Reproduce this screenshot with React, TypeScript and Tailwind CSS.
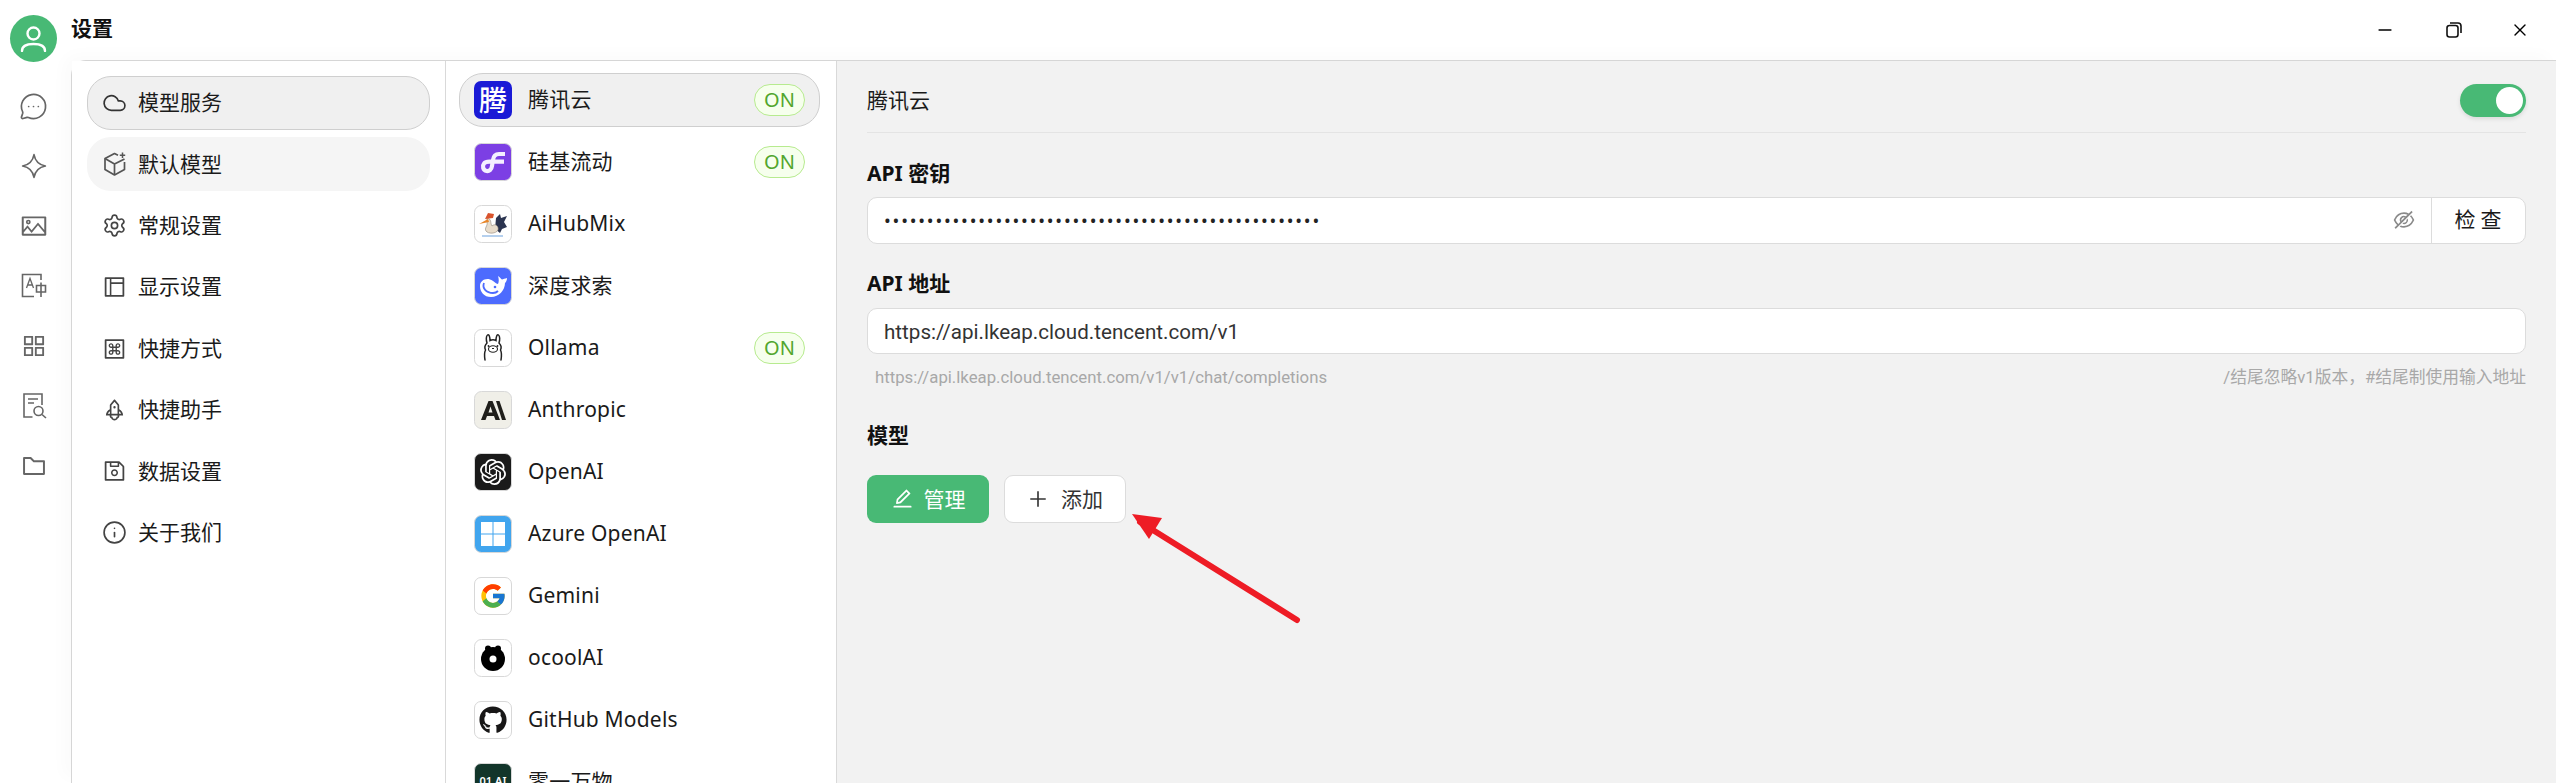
import type { ReactNode } from "react";
import { MessageCircleMore, Cloud, Settings, Info, Minus, X } from "lucide-react";
import {
  AiOutlineLayout,
  AiOutlineMacCommand,
  AiOutlineRocket,
  AiOutlineSave,
  AiOutlineEyeInvisible,
  AiOutlineEdit,
  AiOutlinePlus,
  AiOutlinePicture,
  AiOutlineAppstore,
  AiOutlineFolder,
} from "react-icons/ai";
import { FcGoogle } from "react-icons/fc";
import { FaGithub } from "react-icons/fa";
import { SiOpenai } from "react-icons/si";

const cjk = "font-['Noto_Sans','Noto_Sans_CJK_SC',sans-serif]";
const roboto = "font-['Roboto','Noto_Sans_CJK_SC',sans-serif]";

function SparkIcon() {
  return (
    <svg width="26" height="26" viewBox="0 0 24 24" fill="none" stroke="#666" strokeWidth="1.5" strokeLinejoin="round">
      <path d="M12 1.5C13 7 17 11 22.5 12C17 13 13 17 12 22.5C11 17 7 13 1.5 12C7 11 11 7 12 1.5Z" />
    </svg>
  );
}

function TranslateIcon() {
  return (
    <svg width="26" height="26" viewBox="0 0 26 26" fill="none" stroke="#666" strokeWidth="1.6">
      <path d="M20 7V1.5H1.5V23.5H13" />
      <path d="M5.5 15L9 5.5L12.5 15M6.8 12H11.2" strokeWidth="1.3" />
      <path d="M15.5 12.5H24.5V19H15.5ZM20 9.5V24" />
    </svg>
  );
}

function DocSearchIcon() {
  return (
    <svg width="26" height="26" viewBox="0 0 26 26" fill="none" stroke="#666" strokeWidth="1.6">
      <path d="M21 12V1H3V24H11.5" />
      <path d="M7 6H17M7 10H13" />
      <circle cx="17.5" cy="18" r="4.5" />
      <path d="M21 21.5L25 25" />
    </svg>
  );
}

function CubeIcon() {
  return (
    <svg width="24" height="24" viewBox="0 0 24 24" fill="none" stroke="#555" strokeWidth="1.7" strokeLinejoin="round">
      <path d="M15 3.2L11.5 1.5L2 6.5V17.5L11.5 23L21.5 17.5V10" />
      <path d="M2 6.5L11.5 12L21.5 7M11.5 12V23" />
      <path d="M19.5 0.5V6M16.8 3.2H22.2" strokeWidth="1.5" />
    </svg>
  );
}

function SiliconIcon() {
  return (
    <svg width="38" height="38" viewBox="0 0 38 38">
      <rect x="0.5" y="0.5" width="37" height="37" rx="7" fill="#7c3fe4" stroke="#d8d8d8" />
      <path d="M31 11H25C21 11 19.5 13 19 17L18 23C17.5 27 15 28.5 12.5 28C9 27.3 8 23 10 20.5C11.5 18.5 14 18.7 16 18.7H30" fill="none" stroke="#f4efff" strokeWidth="4.2" />
    </svg>
  );
}

function AiHubIcon() {
  return (
    <svg width="38" height="38" viewBox="0 0 38 38">
      <rect x="0.5" y="0.5" width="37" height="37" rx="7" fill="#fff" stroke="#d8d8d8" />
      <path d="M22 13L26 9L27 13L33 11L30 17L33 22L28 24L26 28L21 24Z" fill="#2b3450" />
      <path d="M13 13C18 14 16 18 18 21C21 18 25 21 24 25C22 29 14 29 12 26C10 23 14 21 13 17Z" fill="#e8dccb" stroke="#8f8578" strokeWidth="0.6" />
      <path d="M5 19L14 14L15 17Z" fill="#e8862a" />
      <path d="M11 14L14 8L20 9L19 13Z" fill="#d9532c" />
      <path d="M8 31H29" stroke="#9cc0e8" strokeWidth="1.5" />
    </svg>
  );
}

function DeepseekIcon() {
  return (
    <svg width="38" height="38" viewBox="0 0 38 38">
      <rect x="0.5" y="0.5" width="37" height="37" rx="7" fill="#4d6bfe" stroke="#d8d8d8" />
      <path d="M6 19C6 14 11 11 16 12.5C20 14 22 17 24 17C25 15 25 12 24 9C26 10 27 12 28 12.5C29 12 31 11.5 33 11C33 13.5 32 15 31 16C31 23 25 30 17 30C10 30 6 25 6 19Z" fill="#fff" />
      <path d="M10 16C8 21 12 26 19 26C21 26 23 25 24 24" fill="none" stroke="#4d6bfe" strokeWidth="1.8" />
      <circle cx="21" cy="20" r="1.3" fill="#4d6bfe" />
    </svg>
  );
}

function OllamaIcon() {
  return (
    <svg width="38" height="38" viewBox="0 0 38 38" fill="none">
      <rect x="0.5" y="0.5" width="37" height="37" rx="7" fill="#fff" stroke="#d8d8d8" />
      <path d="M13 14C12 11 12 7 13.5 6C15 5 16 8 16 11.5C18 10.5 20 10.5 22 11.5C22 8 23 5 24.5 6C26 7 26 11 25 14C27 16 27.5 19 26.5 21C28 24 27.5 28 27 31M13 14C11 16 10.5 19 11.5 21C10 24 10.5 28 11 31" stroke="#222" strokeWidth="1.5" strokeLinecap="round" />
      <ellipse cx="19" cy="20" rx="4.5" ry="3.2" stroke="#222" strokeWidth="1.1" />
      <circle cx="14.5" cy="17" r="0.9" fill="#222" />
      <circle cx="23.5" cy="17" r="0.9" fill="#222" />
      <path d="M18 19.5H20" stroke="#222" strokeWidth="1.2" />
    </svg>
  );
}

function AnthropicIcon() {
  return (
    <svg width="38" height="38" viewBox="0 0 38 38">
      <rect x="0.5" y="0.5" width="37" height="37" rx="7" fill="#f0efe8" stroke="#d8d8d8" />
      <path d="M7 29L14.5 10H18.5L26 29H21.5L20 25H13L11.5 29ZM14.5 21.5H18.5L16.5 15.5Z" fill="#1f1e1a" />
      <path d="M22 10H25.5L32 29H28Z" fill="#1f1e1a" />
    </svg>
  );
}

function AzureIcon() {
  return (
    <svg width="38" height="38" viewBox="0 0 38 38">
      <rect x="0.5" y="0.5" width="37" height="37" rx="7" fill="#41a5ee" stroke="#d8d8d8" />
      <rect x="7" y="7" width="11.5" height="11.5" fill="#fff" />
      <rect x="19.5" y="7" width="11.5" height="11.5" fill="#fff" />
      <rect x="7" y="19.5" width="11.5" height="11.5" fill="#fff" />
      <rect x="19.5" y="19.5" width="11.5" height="11.5" fill="#fff" />
    </svg>
  );
}

function OcoolIcon() {
  return (
    <svg width="38" height="38" viewBox="0 0 38 38">
      <rect x="0.5" y="0.5" width="37" height="37" rx="7" fill="#fff" stroke="#d8d8d8" />
      <circle cx="19" cy="20" r="12" fill="#000" />
      <circle cx="14" cy="9.5" r="3" fill="#000" />
      <circle cx="24" cy="9.5" r="3" fill="#000" />
      <circle cx="19" cy="20" r="3.5" fill="#fff" />
    </svg>
  );
}

function Tile({ className, children }: { className: string; children: ReactNode }) {
  return (
    <div className={`flex h-[38px] w-[38px] shrink-0 items-center justify-center rounded-[7px] border border-[#d8d8d8] ${className}`}>
      {children}
    </div>
  );
}

const sideIcons = [
  <MessageCircleMore key="chat" size={29} strokeWidth={1.4} color="#666" />,
  <SparkIcon key="spark" />,
  <AiOutlinePicture key="img" size={28} color="#666" />,
  <TranslateIcon key="tr" />,
  <AiOutlineAppstore key="grid" size={28} color="#666" />,
  <DocSearchIcon key="file" />,
  <AiOutlineFolder key="folder" size={28} color="#666" />,
];

const menuItems = [
  { label: "模型服务", icon: <Cloud size={26} strokeWidth={1.6} color="#333" />, active: true },
  { label: "默认模型", icon: <CubeIcon />, hover: true },
  { label: "常规设置", icon: <Settings size={27} strokeWidth={1.6} color="#444" /> },
  { label: "显示设置", icon: <AiOutlineLayout size={26} color="#444" /> },
  { label: "快捷方式", icon: <AiOutlineMacCommand size={26} color="#444" /> },
  { label: "快捷助手", icon: <AiOutlineRocket size={26} color="#444" /> },
  { label: "数据设置", icon: <AiOutlineSave size={26} color="#444" /> },
  { label: "关于我们", icon: <Info size={27} strokeWidth={1.6} color="#444" /> },
];

const providers = [
  { name: "腾讯云", on: true, active: true, logo: <div className="flex h-[38px] w-[38px] items-center justify-center rounded-[7px] bg-[#1a1ad6] text-[28px] leading-none font-medium text-white">腾</div> },
  { name: "硅基流动", on: true, logo: <SiliconIcon /> },
  { name: "AiHubMix", logo: <AiHubIcon /> },
  { name: "深度求索", logo: <DeepseekIcon /> },
  { name: "Ollama", on: true, logo: <OllamaIcon /> },
  { name: "Anthropic", logo: <AnthropicIcon /> },
  { name: "OpenAI", logo: <Tile className="bg-[#1a1a1a]"><SiOpenai size={26} color="#fff" /></Tile> },
  { name: "Azure OpenAI", logo: <AzureIcon /> },
  { name: "Gemini", logo: <Tile className="bg-white"><FcGoogle size={28} /></Tile> },
  { name: "ocoolAI", logo: <OcoolIcon /> },
  { name: "GitHub Models", logo: <Tile className="bg-white"><FaGithub size={28} color="#181717" /></Tile> },
  { name: "零一万物", logo: <Tile className="bg-[#12352a] text-[11px] font-semibold text-white">01.AI</Tile> },
];

export default function App() {
  return (
    <div className={`flex h-screen w-screen flex-col overflow-hidden bg-white text-[21px] text-[#1a1a1a] ${cjk}`}>
      {/* title bar */}
      <div className="flex h-[60px] shrink-0 items-center">
        <div className="flex w-[71px] shrink-0 justify-center pt-[16px] pr-[4px]">
          <div className="flex h-[47px] w-[47px] items-center justify-center rounded-full bg-[#48b975]">
            <svg width="27" height="27" viewBox="0 0 27 27" fill="none" stroke="#fff" strokeWidth="2.4">
              <circle cx="13.5" cy="8.5" r="6" />
              <path d="M2 26C2 21 6 19 13.5 19C21 19 25 21 25 26" strokeLinecap="round" />
            </svg>
          </div>
        </div>
        <div className="flex-1 pb-[2px] text-[21px] font-bold text-[#111]">设置</div>
        <div className="flex items-center pr-[26px]">
          <Minus size={20} strokeWidth={2} color="#000" className="mr-[51px]" />
          <svg width="16" height="16" viewBox="0 0 16 16" fill="none" stroke="#111" strokeWidth="1.6" className="mr-[48px]">
            <rect x="1" y="3.5" width="11" height="11.5" rx="2.5" />
            <path d="M4 1H12C14 1 15 2 15 4V11" />
          </svg>
          <X size={20} strokeWidth={1.6} color="#000" />
        </div>
      </div>

      <div className="flex min-h-0 flex-1">
        {/* icon rail */}
        <div className="flex w-[71px] shrink-0 flex-col items-center gap-[26px] pt-[29px] pr-[4px]">
          {sideIcons.map((icon, i) => (
            <div key={i} className="flex h-[34px] w-[34px] items-center justify-center">{icon}</div>
          ))}
        </div>

        <div className="flex min-w-0 flex-1 rounded-tl-[15px] border-t-[1.5px] border-l-[1.5px] border-[#d6d6d6] shadow-[-8px_-6px_16px_rgba(0,0,0,0.02)]">
          {/* settings menu */}
          <div className="flex w-[374px] shrink-0 flex-col gap-[7.4px] border-r-[1.5px] border-[#d9d9d9] bg-white px-[15px] pt-[15px]">
            {menuItems.map((item) => (
              <div
                key={item.label}
                className={`flex h-[54px] items-center gap-[11px] rounded-[24px] border-[1.5px] pl-[14px] ${
                  item.active ? "border-[#cfcfcf] bg-[#f0f0f0]" : item.hover ? "border-transparent bg-[#f5f5f5]" : "border-transparent"
                }`}
              >
                <span className="flex w-[25px] shrink-0 justify-center">{item.icon}</span>
                <span>{item.label}</span>
              </div>
            ))}
          </div>

          {/* providers */}
          <div className="flex w-[391px] shrink-0 flex-col gap-[8px] border-r-[1.5px] border-[#d9d9d9] bg-white pt-[11.5px] pr-[16px] pl-[13px]">
            {providers.map((p) => (
              <div
                key={p.name}
                className={`flex h-[54px] shrink-0 items-center rounded-[24px] border-[1.5px] pr-[14px] pl-[14px] ${
                  p.active ? "border-[#cfcfcf] bg-[#f0f0f0]" : "border-transparent"
                }`}
              >
                <div className="h-[38px] w-[38px] shrink-0">{p.logo}</div>
                <span className="ml-[16px] flex-1 pt-[1px] tracking-[0.2px]">{p.name}</span>
                {p.on && (
                  <span className="flex h-[32px] w-[51px] items-center justify-center rounded-full border-[1.5px] border-[#b7eb8f] bg-[#f6ffed] text-[20px] text-[#52a62e]">
                    ON
                  </span>
                )}
              </div>
            ))}
          </div>

          {/* provider detail */}
          <div className="relative min-w-0 flex-1 bg-[#f2f2f2] pt-[22.5px] pr-[30px] pl-[30px]">
            <div className="flex h-[49px] items-start justify-between border-b-[1.5px] border-[#e4e4e4]">
              <span className="leading-[33px]">腾讯云</span>
              <div className="flex h-[33px] w-[66px] items-center justify-end rounded-full bg-[#48b975] pr-[3px] shadow-[0_2px_4px_rgba(0,0,0,0.1)]">
                <div className="h-[27px] w-[27px] rounded-full bg-white" />
              </div>
            </div>

            <div className="mt-[25px] text-[21px] leading-[30px] font-bold text-[#111]">API 密钥</div>
            <div className="mt-[9px] flex h-[47px] overflow-hidden rounded-[10px] border-[1.5px] border-[#dcdcdc] bg-white">
              <div className="flex flex-1 items-center pl-[16px]">
                <span className="flex-1 text-[18px] tracking-[1.8px] text-[#222]">{"•".repeat(51)}</span>
                <AiOutlineEyeInvisible size={24} color="#8a8a8a" className="mr-[15px]" />
              </div>
              <div className="flex w-[94px] items-center justify-center border-l-[1.5px] border-[#dcdcdc] pl-[4px] tracking-[5px]">检查</div>
            </div>

            <div className="mt-[24px] text-[21px] leading-[30px] font-bold text-[#111]">API 地址</div>
            <div className={`mt-[10px] flex h-[46px] items-center rounded-[10px] border-[1.5px] border-[#dcdcdc] bg-white pt-[3px] pl-[16px] text-[20.6px] text-[#333] ${roboto}`}>
              https://api.lkeap.cloud.tencent.com/v1
            </div>
            <div className={`mt-[11px] flex justify-between pl-[8px] text-[16.75px] leading-[24px] text-[#a8a8a8] ${roboto}`}>
              <span>https://api.lkeap.cloud.tencent.com/v1/v1/chat/completions</span>
              <span>/结尾忽略v1版本，#结尾制使用输入地址</span>
            </div>

            <div className="mt-[31px] text-[21px] leading-[30px] font-bold text-[#111]">模型</div>
            <div className="mt-[25px] flex gap-[15px]">
              <div className="flex h-[48px] w-[122px] items-center justify-center gap-[10px] rounded-[9px] bg-[#48b975] text-white">
                <AiOutlineEdit size={23} />
                <span className="pt-[2px]">管理</span>
              </div>
              <div className="flex h-[48px] w-[122px] items-center justify-center gap-[12px] rounded-[9px] border-[1.5px] border-[#dcdcdc] bg-white text-[#333]">
                <AiOutlinePlus size={22} />
                <span className="pt-[2px]">添加</span>
              </div>
            </div>

            {/* annotation arrow laid over the screenshot */}
            <svg width="190" height="125" viewBox="0 0 190 125" fill="none" className="absolute top-[453px] left-[293px]">
              <path d="M10 8L167 106" stroke="#ee1c25" strokeWidth="6" strokeLinecap="round" />
              <path d="M2 0L32 4L19 25Z" fill="#ee1c25" />
            </svg>
          </div>
        </div>
      </div>
    </div>
  );
}
